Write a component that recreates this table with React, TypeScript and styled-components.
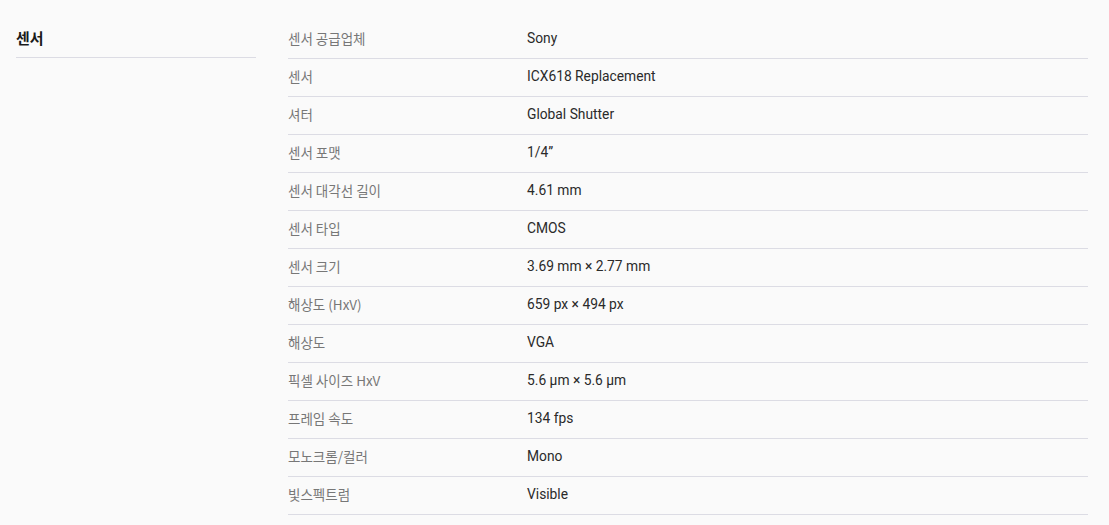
import React from "react";
import styled, { createGlobalStyle } from "styled-components";

const Global = createGlobalStyle`
  html, body { margin: 0; padding: 0; background: #fafafa; }
  body { font-family: Roboto, "Noto Sans CJK KR", sans-serif; }
`;

const Page = styled.div`
  display: flex;
  align-items: flex-start;
  gap: 32px;
  padding: 20px 21px 0 16px;
  min-height: 525px;
  box-sizing: border-box;
  background: #fafafa;
`;

const Side = styled.div`
  width: 240px;
  flex: none;
`;

const Heading = styled.h3`
  margin: 0;
  height: 38px;
  box-sizing: border-box;
  padding-bottom: 3px;
  display: flex;
  align-items: center;
  font-family: "Noto Sans CJK KR", sans-serif;
  font-size: 15px;
  font-weight: 700;
  color: #1a1a1a;
  border-bottom: 1px solid #dcdce4;
`;

const Table = styled.div`
  flex: 1;
  padding-top: 1px;
`;

const Row = styled.div`
  display: grid;
  grid-template-columns: 239px 1fr;
  height: 38px;
  box-sizing: border-box;
  padding-bottom: 3px;
  align-items: center;
  border-bottom: 1px solid #dcdce4;
`;

const Label = styled.div`
  font-family: "Noto Sans CJK KR", sans-serif;
  font-size: 13.5px;
  color: #777;
`;

const Value = styled.div`
  font-family: Roboto, "Noto Sans CJK KR", sans-serif;
  font-size: 13.8px;
  color: #2a2a2a;
`;

const rows: [string, string][] = [
  ["센서 공급업체", "Sony"],
  ["센서", "ICX618 Replacement"],
  ["셔터", "Global Shutter"],
  ["센서 포맷", "1/4\u201D"],
  ["센서 대각선 길이", "4.61 mm"],
  ["센서 타입", "CMOS"],
  ["센서 크기", "3.69 mm × 2.77 mm"],
  ["해상도 (HxV)", "659 px × 494 px"],
  ["해상도", "VGA"],
  ["픽셀 사이즈 HxV", "5.6 µm × 5.6 µm"],
  ["프레임 속도", "134 fps"],
  ["모노크롬/컬러", "Mono"],
  ["빛스펙트럼", "Visible"],
];

export default function App() {
  return (
    <>
      <Global />
      <Page>
        <Side>
          <Heading>센서</Heading>
        </Side>
        <Table>
          {rows.map(([l, v]) => (
            <Row key={l}>
              <Label>{l}</Label>
              <Value>{v}</Value>
            </Row>
          ))}
        </Table>
      </Page>
    </>
  );
}
